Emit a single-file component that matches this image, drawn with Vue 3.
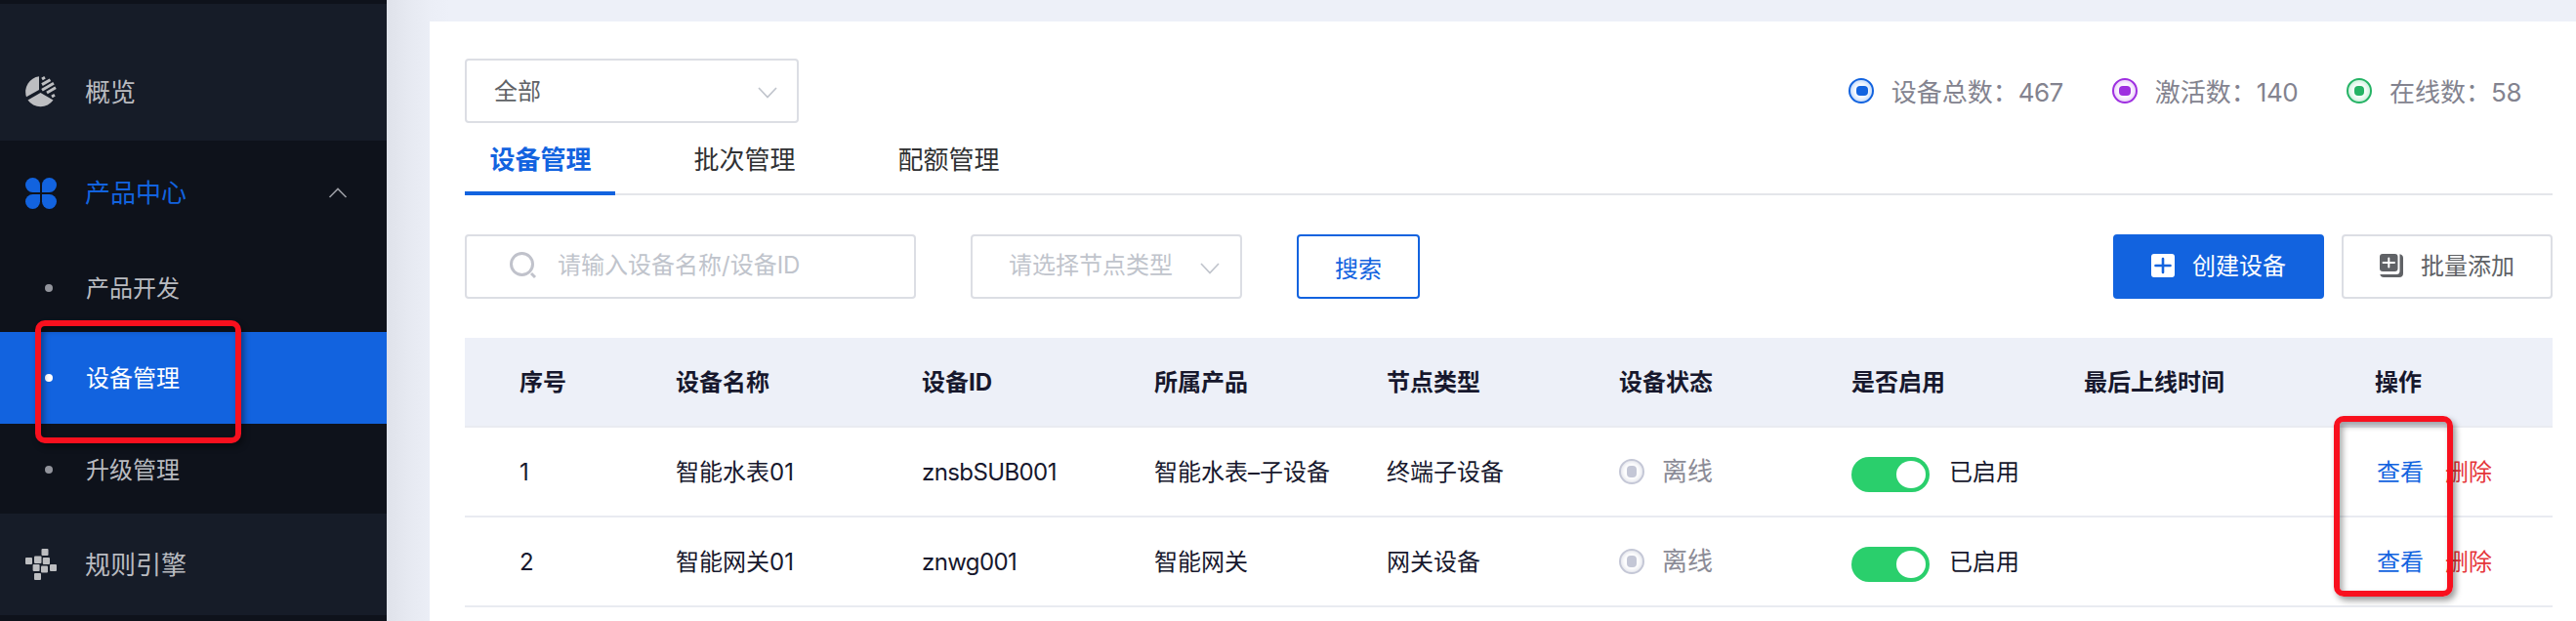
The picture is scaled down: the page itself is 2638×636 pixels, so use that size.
<script setup>
import { ref } from "vue";

const subMenus = ["产品开发", "设备管理", "升级管理"];
const activeMenu = ref("设备管理");

const tabs = ["设备管理", "批次管理", "配额管理"];
const activeTab = ref("设备管理");

const stats = [
  { label: "设备总数", value: 467, type: "total" },
  { label: "激活数", value: 140, type: "activated" },
  { label: "在线数", value: 58, type: "online" },
];

const keyword = ref("");

const columns = [
  "序号",
  "设备名称",
  "设备ID",
  "所属产品",
  "节点类型",
  "设备状态",
  "是否启用",
  "最后上线时间",
  "操作",
];

const devices = ref([
  { name: "智能水表01", id: "znsbSUB001", product: "智能水表–子设备", node: "终端子设备", enabled: true },
  { name: "智能网关01", id: "znwg001", product: "智能网关", node: "网关设备", enabled: true },
]);
</script>

<template>
  <div class="page">
    <aside class="sidebar">
      <div class="menu-item overview">
        <svg class="menu-icon" viewBox="0 0 32 32">
          <path d="M14 0.2V14L1 21.2A16 16 0 0 1 14 0.2Z" />
          <path d="M15.5 17L28.5 24.6A16 16 0 0 1 2.5 24.6Z" />
          <g class="hatch">
            <path d="M17 3L20 1.3M17 8.6L25.5 3.7M17 14.2L29 7.3M22 17L31 11.8M27 21L30 19.3" />
          </g>
        </svg>
        <span>概览</span>
      </div>

      <div class="menu-group">
        <div class="menu-item group-title">
          <svg class="menu-icon" viewBox="0 0 32 32">
            <path d="M15 15H7.5A7.5 7.5 0 1 1 15 7.5Z" />
            <path d="M17 15H24.5A7.5 7.5 0 1 0 17 7.5Z" />
            <path d="M15 17H7.5A7.5 7.5 0 1 0 15 24.5Z" />
            <path d="M17 17H24.5A7.5 7.5 0 1 1 17 24.5Z" />
          </svg>
          <span>产品中心</span>
          <svg class="arrow-up" viewBox="0 0 20 12">
            <path d="M1.5 10L10 1.5L18.5 10" />
          </svg>
        </div>
        <div
          v-for="menu in subMenus"
          :key="menu"
          class="sub-item"
          :class="{ active: menu === activeMenu }"
          @click="activeMenu = menu"
        >
          <i class="dot"></i>
          <span>{{ menu }}</span>
        </div>
      </div>

      <div class="menu-item rules">
        <svg class="menu-icon" viewBox="0 0 32 32">
          <rect x="16.5" y="0" width="7" height="7" rx="1" />
          <rect x="0" y="9" width="7" height="7" rx="1" />
          <rect x="9" y="7.5" width="7.5" height="7.5" rx="1" />
          <rect x="17.8" y="9" width="7.2" height="7" rx="1" />
          <rect x="7.6" y="16" width="7" height="7" rx="1" />
          <rect x="16" y="17.6" width="7" height="7" rx="1" />
          <rect x="25" y="16" width="7" height="7" rx="1" />
          <rect x="9" y="25" width="7" height="7" rx="1" />
        </svg>
        <span>规则引擎</span>
      </div>
    </aside>

    <main class="main">
      <section class="panel">
        <div class="top-row">
          <div class="select product-select">
            <span>全部</span>
            <svg class="arrow-down" viewBox="0 0 20 12">
              <path d="M1 1L10 10.5L19 1" />
            </svg>
          </div>
          <div class="stats">
            <div v-for="stat in stats" :key="stat.type" class="stat">
              <i class="ring" :class="stat.type"></i>
              <span>{{ stat.label }}：</span>
              <span class="value">{{ stat.value }}</span>
            </div>
          </div>
        </div>

        <nav class="tabs">
          <div
            v-for="tab in tabs"
            :key="tab"
            class="tab"
            :class="{ active: tab === activeTab }"
            @click="activeTab = tab"
          >
            {{ tab }}
          </div>
        </nav>

        <div class="filters">
          <div class="search-box">
            <svg class="search-icon" viewBox="0 0 28 28">
              <circle cx="12.5" cy="12.5" r="11" />
              <path d="M22 22L26 26" />
            </svg>
            <input v-model="keyword" placeholder="请输入设备名称/设备ID" />
          </div>
          <div class="select node-select">
            <span>请选择节点类型</span>
            <svg class="arrow-down" viewBox="0 0 20 12">
              <path d="M1 1L10 10.5L19 1" />
            </svg>
          </div>
          <button class="btn search">搜索</button>
          <button class="btn primary">
            <svg class="btn-icon" viewBox="0 0 24 24">
              <rect width="24" height="24" rx="3" />
              <path class="plus" d="M12 5V19M4.5 12H19.5" />
            </svg>
            <span>创建设备</span>
          </button>
          <button class="btn plain">
            <svg class="btn-icon" viewBox="0 0 24 24">
              <rect width="18.5" height="18" rx="3" />
              <path class="plus" d="M9.3 4.5V13.5M3.5 9H15" />
              <path d="M20.5 0.3A4 4 0 0 1 24 4V20A4 4 0 0 1 20 24H4A4 4 0 0 1 0.3 21H17A3.5 3.5 0 0 0 20.5 17.5Z" />
            </svg>
            <span>批量添加</span>
          </button>
        </div>

        <div class="table">
          <div class="row head">
            <div v-for="column in columns" :key="column">{{ column }}</div>
          </div>
          <div v-for="(device, index) in devices" :key="device.id" class="row">
            <div>{{ index + 1 }}</div>
            <div>{{ device.name }}</div>
            <div class="device-id">{{ device.id }}</div>
            <div>{{ device.product }}</div>
            <div>{{ device.node }}</div>
            <div class="status">
              <i class="ring offline"></i>
              <span>离线</span>
            </div>
            <div class="enable">
              <i class="switch" :class="{ on: device.enabled }" @click="device.enabled = !device.enabled"></i>
              <span>{{ device.enabled ? "已启用" : "已禁用" }}</span>
            </div>
            <div></div>
            <div class="actions">
              <a class="view">查看</a>
              <a class="delete">删除</a>
            </div>
          </div>
        </div>
      </section>
    </main>

    <div class="mark mark-menu"></div>
    <div class="mark mark-view"></div>
  </div>
</template>

<style>
body {
  margin: 0;
  overflow: hidden;
}
</style>

<style scoped>
.page {
  position: relative;
  display: flex;
  width: 2638px;
  height: 636px;
  overflow: hidden;
  font-family: Inter, "Noto Sans CJK SC", sans-serif;
  font-size: 24px;
  line-height: 36px;
  color: #17182d;
  background: #edf0f8;
}

.page * {
  box-sizing: border-box;
}

/* sidebar */
.sidebar {
  width: 396px;
  flex: none;
  padding-top: 4px;
  background: #0e121b;
  color: #b9bbc0;
}

.menu-item {
  display: flex;
  align-items: center;
  padding: 0 40px 0 26px;
  font-size: 26px;
  background: #161c28;
}

.menu-icon {
  width: 32px;
  height: 32px;
  margin-right: 29px;
  fill: #bdbec1;
}

.hatch {
  stroke: #bdbec1;
  stroke-width: 3;
}

.overview {
  height: 140px;
  padding-top: 40px;
}

.overview span,
.rules span {
  padding-top: 2px;
}

.group-title {
  height: 104px;
  padding-top: 4px;
  background: none;
  color: #1263df;
}

.group-title .menu-icon {
  fill: #1263df;
}

.arrow-up {
  width: 20px;
  height: 12px;
  margin-left: auto;
  fill: none;
  stroke: #9a9ca3;
  stroke-width: 1.6;
}

.menu-group {
  height: 382px;
}

.sub-item {
  display: flex;
  align-items: center;
  height: 94px;
  padding-left: 46px;
}

.sub-item:nth-child(2) {
  height: 92px;
  padding-top: 2px;
}

.sub-item span {
  padding-top: 2px;
}

.dot {
  width: 8px;
  height: 8px;
  margin-right: 34px;
  border-radius: 50%;
  background: #92949c;
}

.sub-item.active {
  background: #1263df;
  color: #fff;
}

.sub-item.active .dot {
  background: #fff;
}

.rules {
  height: 104px;
}

/* main */
.main {
  flex: 1;
  padding: 22px 0 0 44px;
  background: linear-gradient(90deg, #dfe2ea, #e6e9f1 22px, #ebeef6 44px, #edf0f8 64px);
}

.panel {
  height: 614px;
  padding: 38px 24px 0 36px;
  background: #fff;
}

.top-row {
  display: flex;
  justify-content: space-between;
}

.select {
  display: flex;
  align-items: center;
  justify-content: space-between;
  height: 66px;
  border: 2px solid #dcdee4;
  border-radius: 4px;
}

.product-select {
  width: 342px;
  padding: 0 20px 0 28px;
  color: #606266;
}

.product-select span {
  padding-top: 1px;
}

.arrow-down {
  width: 20px;
  height: 12px;
  margin-top: 4px;
  fill: none;
  stroke: #c0c4cc;
  stroke-width: 1.7;
}

.stats {
  display: flex;
  gap: 50px;
  padding: 17px 32px 0 0;
  font-size: 26px;
  color: #83838f;
}

.stat {
  display: flex;
  align-items: center;
  height: 36px;
}

.value {
  letter-spacing: -0.5px;
}

.ring {
  display: flex;
  align-items: center;
  justify-content: center;
  width: 26px;
  height: 26px;
  margin: -4px 18px 0 0;
  border: 2px solid;
  border-radius: 50%;
}

.ring::after {
  content: "";
  width: 12px;
  height: 10px;
  border-radius: 4px;
  background: currentColor;
}

.total {
  color: #1263df;
  box-shadow: inset 0 0 6px #9cc2f8;
}

.total::after {
  margin-left: 2px;
}

.activated {
  color: #9e2fe0;
  box-shadow: inset 0 0 6px #dcb2f6;
}

.online {
  color: #25b365;
  box-shadow: inset 0 0 6px #a5e6c3;
}

.online::after {
  width: 10px;
}

/* tabs */
.tabs {
  display: flex;
  gap: 55px;
  height: 74px;
  border-bottom: 2px solid #e4e6ea;
  font-size: 26px;
  color: #303133;
}

.tab {
  width: 154px;
  height: 74px;
  padding: 20px 0 0 1px;
  text-align: center;
}

.tab.active {
  border-bottom: 4px solid #1263df;
  font-weight: bold;
  color: #1263df;
}

/* filters */
.filters {
  display: flex;
  margin-top: 40px;
}

.search-box {
  display: flex;
  align-items: center;
  width: 462px;
  height: 66px;
  padding: 0 0 3px 44px;
  border: 2px solid #dcdee4;
  border-radius: 4px;
}

.search-icon {
  width: 28px;
  height: 28px;
  margin-right: 21px;
  fill: none;
  stroke: #c0c2cb;
  stroke-width: 3;
}

.search-box input {
  width: 340px;
  padding: 0;
  border: none;
  outline: none;
  font: inherit;
}

.search-box input::placeholder {
  color: #c0c4cc;
}

.node-select {
  width: 278px;
  margin: 0 56px;
  padding: 0 21px 0 37px;
  color: #c0c4cc;
}

.node-select span {
  margin-top: -3px;
}

.btn {
  display: flex;
  align-items: center;
  justify-content: center;
  height: 66px;
  padding: 0;
  border: 2px solid #dcdee4;
  border-radius: 4px;
  background: #fff;
  font: inherit;
  cursor: pointer;
}

.search {
  width: 126px;
  padding-top: 5px;
  border-color: #1263df;
  color: #1263df;
}

.primary,
.plain {
  width: 216px;
  padding-bottom: 3px;
  color: #606266;
}

.primary {
  margin: 0 18px 0 auto;
  border-color: #1263df;
  background: #1263df;
  color: #fff;
}

.primary span,
.plain span {
  padding-top: 2px;
}

.btn-icon {
  width: 24px;
  height: 24px;
  margin-right: 18px;
  fill: currentColor;
}

.plus {
  stroke: #fff;
  stroke-width: 2;
  stroke-linecap: round;
}

.primary .plus {
  stroke: #1263df;
  stroke-width: 2.6;
}

/* table */
.table {
  margin-top: 40px;
}

.row {
  display: grid;
  grid-template-columns: 160px 252px 238px 238px 238px 238px 238px 298px 1fr;
  align-items: center;
  height: 92px;
  padding: 2px 0 0 56px;
  border-bottom: 2px solid #e9ebf1;
}

.head {
  background: #edf0f8;
  font-weight: bold;
}

.device-id {
  letter-spacing: -0.6px;
}

.status,
.enable {
  display: flex;
  align-items: center;
}

.status {
  margin-top: -2px;
  font-size: 26px;
  color: #8b8b96;
}

.offline {
  margin-top: 0;
  color: #c4c7d6;
  box-shadow: inset 0 0 5px #d4d6e0;
}

.offline::after {
  width: 10px;
  height: 12px;
}

.switch {
  width: 80px;
  height: 36px;
  margin: 4px 20px 0 0;
  padding: 4px;
  border-radius: 18px;
  background: #c0c4cc;
}

.switch::after {
  content: "";
  display: block;
  width: 30px;
  height: 28px;
  border-radius: 50%;
  background: #fff;
}

.switch.on {
  background: #2acf6c;
}

.switch.on::after {
  margin-left: auto;
}

.actions {
  display: flex;
  gap: 22px;
  padding-left: 2px;
}

.view {
  color: #1263df;
}

.delete {
  color: #e53539;
}

/* highlight boxes */
.mark {
  position: absolute;
  box-sizing: border-box;
  border: 6px solid #f8101e;
  border-radius: 10px;
  box-shadow: 3px 4px 6px rgba(0, 0, 0, 0.4), inset 3px 4px 6px rgba(0, 0, 0, 0.35);
}

.mark-menu {
  left: 36px;
  top: 328px;
  width: 211px;
  height: 126px;
}

.mark-view {
  left: 2390px;
  top: 426px;
  width: 122px;
  height: 185px;
}
</style>
